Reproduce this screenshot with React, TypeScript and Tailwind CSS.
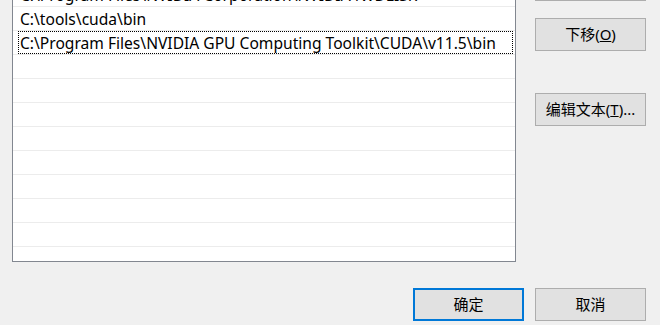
import React from 'react';

const font = { fontFamily: '"Noto Sans", "Noto Sans CJK SC", sans-serif' };

const rows = [
  'C:\\Program Files\\NVIDIA Corporation\\NVIDIA NvDLISR',
  'C:\\tools\\cuda\\bin',
  'C:\\Program Files\\NVIDIA GPU Computing Toolkit\\CUDA\\v11.5\\bin',
  '',
  '',
  '',
  '',
  '',
  '',
  '',
  '',
];

function Btn({ children, primary = false, className = '' }: { children: React.ReactNode; primary?: boolean; className?: string }) {
  return (
    <button
      type="button"
      className={`flex h-[33px] w-[111px] items-center justify-center bg-[#e1e1e1] text-[15px] text-black ${
        primary ? 'border-2 border-[#0078d7]' : 'border border-[#adadad]'
      } ${className}`}
    >
      {children}
    </button>
  );
}

export default function App() {
  return (
    <div className="h-[325px] w-[660px] overflow-hidden bg-[#f0f0f0] text-black" style={font}>
      <div className="-mt-[18px] flex items-start">
        {/* Path list */}
        <div className="ml-[12px] h-[280px] w-[504px] border border-[#828790] bg-white">
          {rows.map((r, i) => (
            <div key={i} className="h-[24px] border-b border-[#ececec]">
              <div
                className={`flex h-[23px] items-center pt-[2px] text-[15.6px] leading-none whitespace-nowrap ${
                  i === 2 ? 'ml-[5px] mr-[2px] border border-dotted border-black pl-[1px]' : 'pl-[7px]'
                }`}
              >
                {r}
              </div>
            </div>
          ))}
        </div>

        {/* Side buttons */}
        <div className="-mt-[14px] ml-[19px] flex flex-col">
          <Btn>上移(<span className="underline">U</span>)</Btn>
          <Btn className="mt-[17px]">
            下移(<span className="underline">O</span>)
          </Btn>
          <Btn className="mt-[42px]">
            编辑文本(<span className="underline">T</span>)...
          </Btn>
        </div>
      </div>

      <div className="mt-[26px] flex justify-end gap-[11px] pr-[14px]">
        <Btn primary>确定</Btn>
        <Btn>取消</Btn>
      </div>
    </div>
  );
}
